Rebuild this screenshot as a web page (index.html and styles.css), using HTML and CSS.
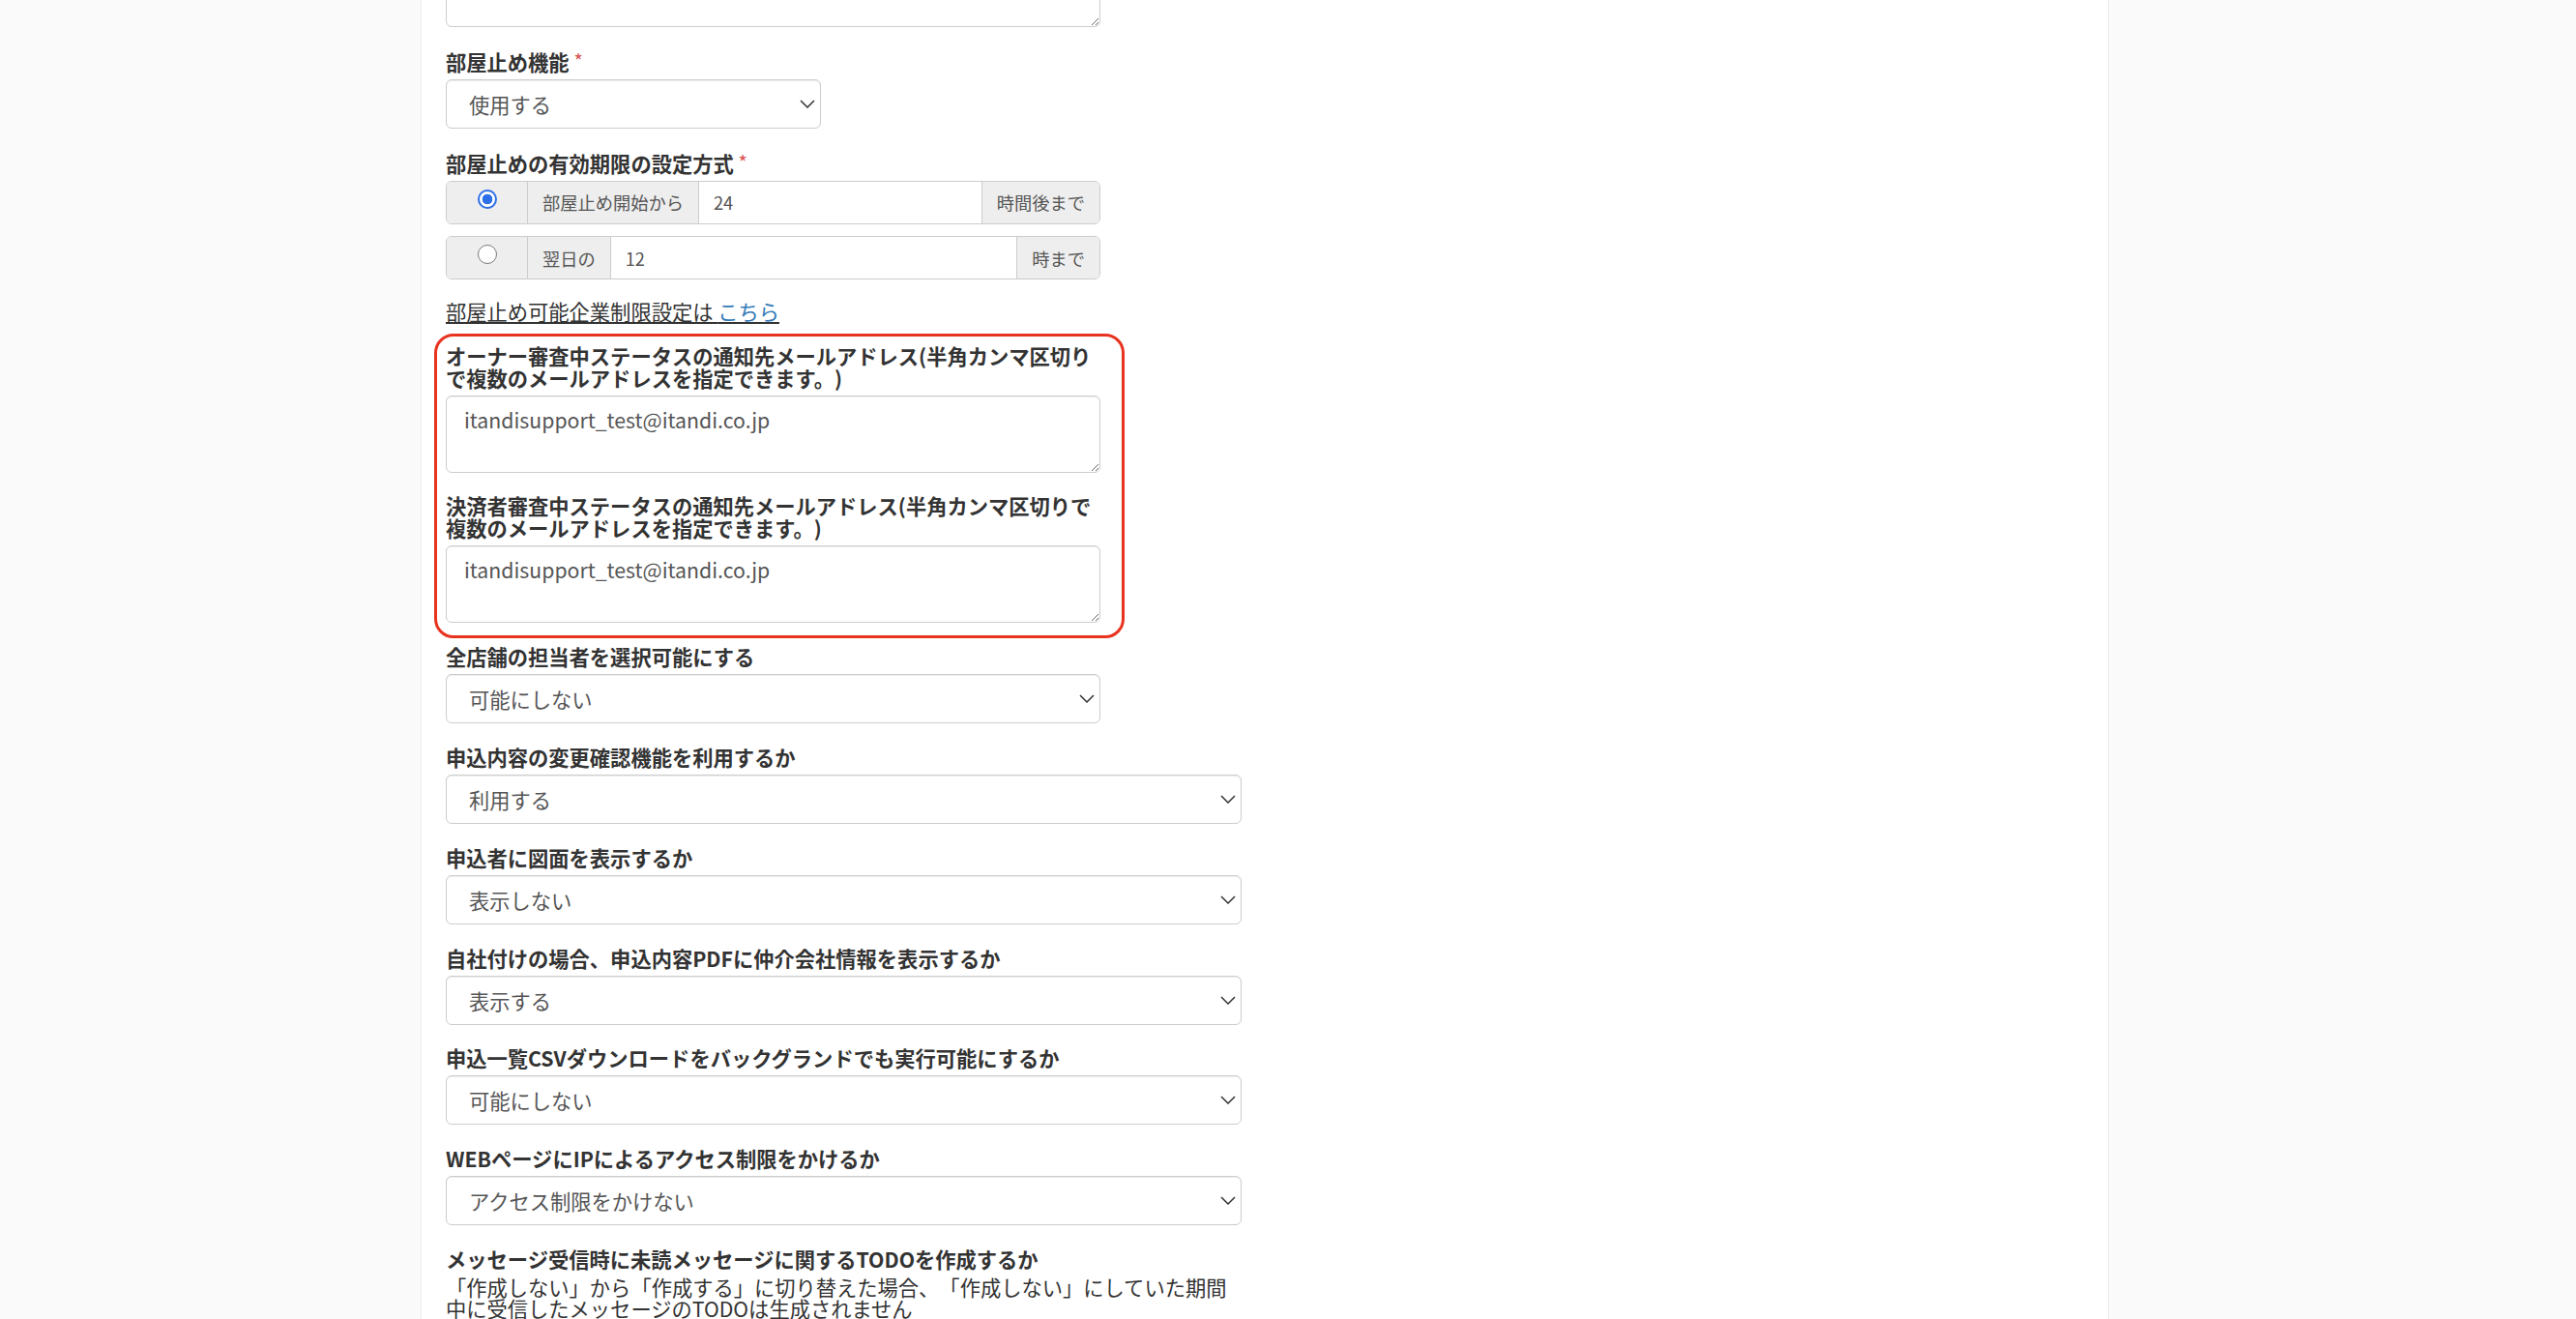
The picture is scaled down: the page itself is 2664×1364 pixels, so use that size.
FILE: index.html
```html
<!DOCTYPE html>
<html lang="ja">
<head>
  <meta charset="UTF-8">
  <title>申込設定</title>
  <meta name="viewport" content="width=device-width, initial-scale=1.0">
  <link rel="stylesheet" href="styles.css">
</head>

<body>
  <div class="page">
    <form class="settings">
      <div class="form-group md top">
        <textarea class="form-control" rows="2"></textarea>
      </div>

      <div class="form-group md">
        <label class="control-label">部屋止め機能 <span class="req">*</span></label>
        <div class="select-wrap sm">
          <select class="form-control"><option>使用する</option><option>使用しない</option></select>
          <svg class="chevron" width="16" height="9" viewBox="0 0 16 9"><path d="M1 1l7 7 7-7"/></svg>
        </div>
      </div>

      <div class="form-group md">
        <label class="control-label">部屋止めの有効期限の設定方式 <span class="req">*</span></label>
        <div class="input-group">
          <span class="addon radio-addon"><input type="radio" class="radio" name="limit" checked></span>
          <span class="addon">部屋止め開始から</span>
          <input type="text" class="ig-input" value="24">
          <span class="addon">時間後まで</span>
        </div>
        <div class="input-group">
          <span class="addon radio-addon"><input type="radio" class="radio" name="limit"></span>
          <span class="addon">翌日の</span>
          <input type="text" class="ig-input" value="12">
          <span class="addon">時まで</span>
        </div>
      </div>

      <p class="note"><span class="u">部屋止め可能企業制限設定は <a href="#">こちら</a></span></p>

      <div class="highlight">
        <div class="form-group md">
          <label class="control-label">オーナー審査中ステータスの通知先メールアドレス(半角カンマ区切りで複数のメールアドレスを指定できます。)</label>
          <textarea class="form-control" rows="2">itandisupport_test@itandi.co.jp</textarea>
        </div>
        <div class="form-group md">
          <label class="control-label">決済者審査中ステータスの通知先メールアドレス(半角カンマ区切りで複数のメールアドレスを指定できます。)</label>
          <textarea class="form-control" rows="2">itandisupport_test@itandi.co.jp</textarea>
        </div>
      </div>

      <div class="form-group md">
        <label class="control-label">全店舗の担当者を選択可能にする</label>
        <div class="select-wrap">
          <select class="form-control"><option>可能にしない</option><option>可能にする</option></select>
          <svg class="chevron" width="16" height="9" viewBox="0 0 16 9"><path d="M1 1l7 7 7-7"/></svg>
        </div>
      </div>

      <div class="form-group lg">
        <label class="control-label">申込内容の変更確認機能を利用するか</label>
        <div class="select-wrap">
          <select class="form-control"><option>利用する</option><option>利用しない</option></select>
          <svg class="chevron" width="16" height="9" viewBox="0 0 16 9"><path d="M1 1l7 7 7-7"/></svg>
        </div>
      </div>

      <div class="form-group lg">
        <label class="control-label">申込者に図面を表示するか</label>
        <div class="select-wrap">
          <select class="form-control"><option>表示しない</option><option>表示する</option></select>
          <svg class="chevron" width="16" height="9" viewBox="0 0 16 9"><path d="M1 1l7 7 7-7"/></svg>
        </div>
      </div>

      <div class="form-group lg">
        <label class="control-label">自社付けの場合、申込内容PDFに仲介会社情報を表示するか</label>
        <div class="select-wrap">
          <select class="form-control"><option>表示する</option><option>表示しない</option></select>
          <svg class="chevron" width="16" height="9" viewBox="0 0 16 9"><path d="M1 1l7 7 7-7"/></svg>
        </div>
      </div>

      <div class="form-group lg">
        <label class="control-label">申込一覧CSVダウンロードをバックグランドでも実行可能にするか</label>
        <div class="select-wrap">
          <select class="form-control"><option>可能にしない</option><option>可能にする</option></select>
          <svg class="chevron" width="16" height="9" viewBox="0 0 16 9"><path d="M1 1l7 7 7-7"/></svg>
        </div>
      </div>

      <div class="form-group lg">
        <label class="control-label">WEBページにIPによるアクセス制限をかけるか</label>
        <div class="select-wrap">
          <select class="form-control"><option>アクセス制限をかけない</option><option>アクセス制限をかける</option></select>
          <svg class="chevron" width="16" height="9" viewBox="0 0 16 9"><path d="M1 1l7 7 7-7"/></svg>
        </div>
      </div>

      <div class="form-group lg">
        <label class="control-label">メッセージ受信時に未読メッセージに関するTODOを作成するか</label>
        <p class="help">「作成しない」から「作成する」に切り替えた場合、「作成しない」にしていた期間中に受信したメッセージのTODOは生成されません</p>
      </div>
    </form>
  </div>
</body>
</html>
```

FILE: styles.css
```css
html, body {
  height: 100%;
}
body {
  margin: 0;
  background: #fafafa;
  font-family: "Noto Sans CJK JP", sans-serif;
  font-size: 21.28px;
  color: #333;
  text-spacing-trim: space-all;
  overflow: hidden;
}
.page {
  display: flow-root;
  margin-left: 435px;
  width: 1746px;
  min-height: 100%;
  box-sizing: border-box;
  padding-left: 25px;
  background: #fff;
  border-left: 1px solid #ececec;
  border-right: 1px solid #ececec;
}
.settings {
  margin: 0;
}
.form-group {
  margin-bottom: 22.8px;
}
.form-group.top {
  margin-top: -52px;
}
.md { width: 677px; }
.lg { width: 823px; }
.sm { width: 388px; }

.control-label {
  display: block;
  font-weight: bold;
  line-height: 23px;
  margin-bottom: 7px;
}
.req {
  color: #d9534f;
  font-size: 20px;
  font-weight: normal;
  vertical-align: 2px;
}

.form-control {
  display: block;
  width: 100%;
  box-sizing: border-box;
  height: 51px;
  margin: 0;
  padding: 0 18px;
  font: inherit;
  color: #555;
  background: #fff;
  border: 1px solid #ccc;
  border-radius: 6px;
  box-shadow: inset 0 1px 1px rgba(0,0,0,.075);
}
textarea.form-control {
  height: 80px;
  padding: 9px 18px;
  line-height: 30px;
  resize: vertical;
}

.select-wrap {
  display: grid;
}
.select-wrap > * {
  grid-area: 1 / 1;
}
.select-wrap select {
  appearance: none;
  -webkit-appearance: none;
  padding: 0 40px 0 23px;
}
.chevron {
  justify-self: end;
  align-self: center;
  margin-right: 6px;
  pointer-events: none;
}
.chevron path {
  fill: none;
  stroke: #333;
  stroke-width: 1.5;
}

.input-group {
  display: flex;
  height: 45px;
  box-sizing: border-box;
  border: 1px solid #ccc;
  border-radius: 6px;
  overflow: hidden;
  font-size: 18.24px;
  margin-bottom: 12.5px;
}
.input-group:first-of-type {
  margin-top: 1.5px;
}
.input-group:last-child {
  margin-bottom: 0;
}
.addon {
  display: flex;
  align-items: center;
  padding: 0 15px;
  background: #eee;
  color: #555;
  white-space: nowrap;
}
.addon + .addon, .addon + .ig-input, .ig-input + .addon {
  border-left: 1px solid #ccc;
}
.radio-addon {
  width: 83px;
  box-sizing: border-box;
  justify-content: center;
  align-items: flex-start;
}
.ig-input {
  flex: 1;
  min-width: 0;
  border: none;
  padding: 0 15px;
  font: inherit;
  color: #555;
  outline: none;
}
.radio {
  appearance: none;
  -webkit-appearance: none;
  margin: 8px 0 0;
  width: 20px;
  height: 20px;
  box-sizing: border-box;
  border: 1.5px solid #7a7a7a;
  border-radius: 50%;
  background: #fff;
}
.radio:checked {
  border: 2px solid #2d6fe6;
  background: radial-gradient(circle, #2d6fe6 0 5px, #fff 5.6px);
}

.note {
  margin: -2px 0 22.8px;
  line-height: 23px;
}
.note .u {
  text-decoration: underline;
}
.note a {
  color: #337ab7;
  text-decoration: none;
}

.highlight {
  position: relative;
}
.highlight::before {
  content: "";
  position: absolute;
  top: -10.5px;
  bottom: -16px;
  left: -12px;
  width: 714px;
  box-sizing: border-box;
  border: 3.5px solid #e8331f;
  border-radius: 20px;
  pointer-events: none;
}

.help {
  margin: 0;
  line-height: 21.5px;
}
```
